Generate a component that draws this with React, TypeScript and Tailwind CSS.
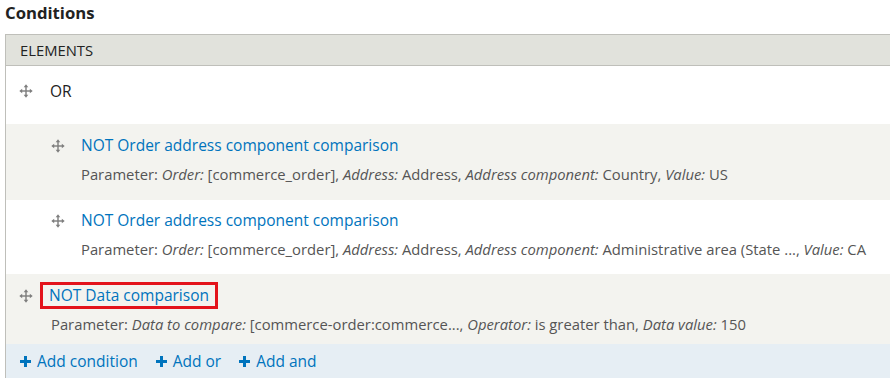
import React from 'react';

function DragIcon() {
  return (
    <svg width="14" height="14" viewBox="0 0 14 14" className="shrink-0">
      <g fill="#7d7d7d">
        <rect x="6.3" y="2" width="1.4" height="10" />
        <rect x="2" y="6.3" width="10" height="1.4" />
        <path d="M7 0.3 L9.3 3.2 L4.7 3.2 Z" />
        <path d="M7 13.7 L9.3 10.8 L4.7 10.8 Z" />
        <path d="M0.3 7 L3.2 4.7 L3.2 9.3 Z" />
        <path d="M13.7 7 L10.8 4.7 L10.8 9.3 Z" />
      </g>
    </svg>
  );
}

function Plus() {
  return (
    <svg width="11" height="11" viewBox="0 0 11 11" className="shrink-0">
      <path d="M4 0h3v4h4v3H7v4H4V7H0V4h4z" fill="#0074bd" />
    </svg>
  );
}

interface Part {
  label: string;
  value: string;
}

function Params({ parts }: { parts: Part[] }) {
  return (
    <div className="text-[14.8px] text-[#555] whitespace-nowrap">
      Parameter:{' '}
      {parts.map((p, i) => (
        <span key={i}>
          <em>{p.label}:</em> {p.value}
          {i < parts.length - 1 ? ', ' : ''}
        </span>
      ))}
    </div>
  );
}

export default function App() {
  const link = 'text-[#0074bd] text-[15.5px]';
  return (
    <div
      className="w-[890px] h-[378px] overflow-hidden bg-white text-[#333]"
      style={{ fontFamily: '"Open Sans", "DejaVu Sans", sans-serif' }}
    >
      <h2 className="pl-[5px] h-[34px] text-[16.7px] font-bold leading-[26px] text-[#222]">Conditions</h2>
      <div className="ml-[5px] border-l border-[#bfbfba]">
        <div className="h-[32px] flex items-center pl-[14px] bg-[#e1e2dc] border-y border-[#bfbfba] text-[14.8px] uppercase text-[#222]">
          Elements
        </div>
        <div className="h-[58px] flex items-start pt-[18px] gap-[17px] pl-[13px] bg-white">
          <DragIcon />
          <span className="text-[15.5px] leading-[14px] text-[#222]">OR</span>
        </div>
        <div className="h-[76px] bg-[#f3f3ef] pl-[45px] pt-[10px]">
          <div className="flex items-center gap-[16px]">
            <DragIcon />
            <a className={link}>NOT Order address component comparison</a>
          </div>
          <div className="pl-[30px] mt-[6px]">
            <Params
              parts={[
                { label: 'Order', value: '[commerce_order]' },
                { label: 'Address', value: 'Address' },
                { label: 'Address component', value: 'Country' },
                { label: 'Value', value: 'US' },
              ]}
            />
          </div>
        </div>
        <div className="h-[74px] bg-white pl-[45px] pt-[9px]">
          <div className="flex items-center gap-[16px]">
            <DragIcon />
            <a className={link}>NOT Order address component comparison</a>
          </div>
          <div className="pl-[30px] mt-[6px]">
            <Params
              parts={[
                { label: 'Order', value: '[commerce_order]' },
                { label: 'Address', value: 'Address' },
                { label: 'Address component', value: 'Administrative area (State ...' },
                { label: 'Value', value: 'CA' },
              ]}
            />
          </div>
        </div>
        <div className="h-[70px] bg-[#f3f3ef] pl-[13px] pt-[8px]">
          <div className="flex items-center gap-[7px]">
            <DragIcon />
            <a className={`${link} border-[3px] border-[#e3131b] px-[6px] leading-[21px]`}>NOT Data comparison</a>
          </div>
          <div className="pl-[32px] mt-[4px]">
            <Params
              parts={[
                { label: 'Data to compare', value: '[commerce-order:commerce...' },
                { label: 'Operator', value: 'is greater than' },
                { label: 'Data value', value: '150' },
              ]}
            />
          </div>
        </div>
        <div className="h-[34px] bg-[#e6eef4] flex items-center pl-[14px] gap-[18px] text-[15.5px] text-[#0074bd] pt-[1px]">
          <a className="flex items-center gap-[6px]"><Plus />Add condition</a>
          <a className="flex items-center gap-[6px]"><Plus />Add or</a>
          <a className="flex items-center gap-[6px]"><Plus />Add and</a>
        </div>
      </div>
    </div>
  );
}
